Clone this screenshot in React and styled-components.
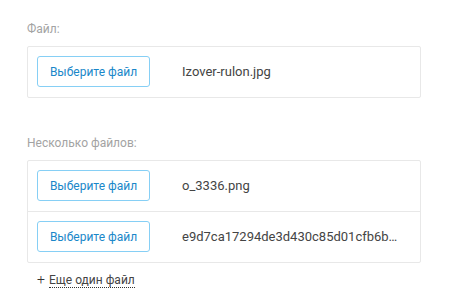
import React from "react";
import styled, { createGlobalStyle } from "styled-components";

const Global = createGlobalStyle`
  html, body { margin: 0; padding: 0; background: #fff; }
  body { font-family: Roboto, "Noto Sans", sans-serif; }
`;

const Page = styled.div`
  padding: 22px 0 0 27px;
  width: 394px;
`;

const Section = styled.section`
  margin-bottom: ${(p) => p.$gap || 0}px;
`;

const Label = styled.div`
  font-size: 12px;
  line-height: 14px;
  color: #a3a3a3;
  margin-bottom: 10px;
`;

const Card = styled.div`
  border: 1px solid #e8e8e8;
  border-radius: 2px;
`;

const Row = styled.div`
  display: flex;
  align-items: center;
  padding: 9px 9px 10px 9px;
  & + & {
    border-top: 1px solid #e8e8e8;
  }
`;

const PickButton = styled.button`
  box-sizing: border-box;
  width: 113px;
  height: 31px;
  flex: none;
  border: 1px solid #86cff5;
  border-radius: 3px;
  background: #fff;
  color: #1a87c9;
  font-family: Roboto, sans-serif;
  font-size: 12px;
  padding: 0;
  cursor: pointer;
`;

const FileName = styled.span`
  margin-left: 32px;
  font-size: 13px;
  color: #444;
  white-space: nowrap;
`;

const AddMore = styled.div`
  display: flex;
  align-items: baseline;
  margin: 8px 0 0 10px;
  font-size: 12px;
  color: #333;
`;

const Plus = styled.span`
  font-size: 14px;
  font-weight: 300;
  width: 12px;
`;

const DottedLink = styled.a`
  color: #444;
  text-decoration: none;
  border-bottom: 1px dotted #333;
  line-height: 14px;
  cursor: pointer;
`;

export default function App() {
  return (
    <>
      <Global />
      <Page>
        <Section $gap={38}>
          <Label>Файл:</Label>
          <Card>
            <Row>
              <PickButton>Выберите файл</PickButton>
              <FileName>Izover-rulon.jpg</FileName>
            </Row>
          </Card>
        </Section>
        <Section>
          <Label>Несколько файлов:</Label>
          <Card>
            <Row>
              <PickButton>Выберите файл</PickButton>
              <FileName>o_3336.png</FileName>
            </Row>
            <Row>
              <PickButton>Выберите файл</PickButton>
              <FileName>e9d7ca17294de3d430c85d01cfb6b…</FileName>
            </Row>
          </Card>
          <AddMore>
            <Plus>+</Plus>
            <DottedLink>Еще один файл</DottedLink>
          </AddMore>
        </Section>
      </Page>
    </>
  );
}
